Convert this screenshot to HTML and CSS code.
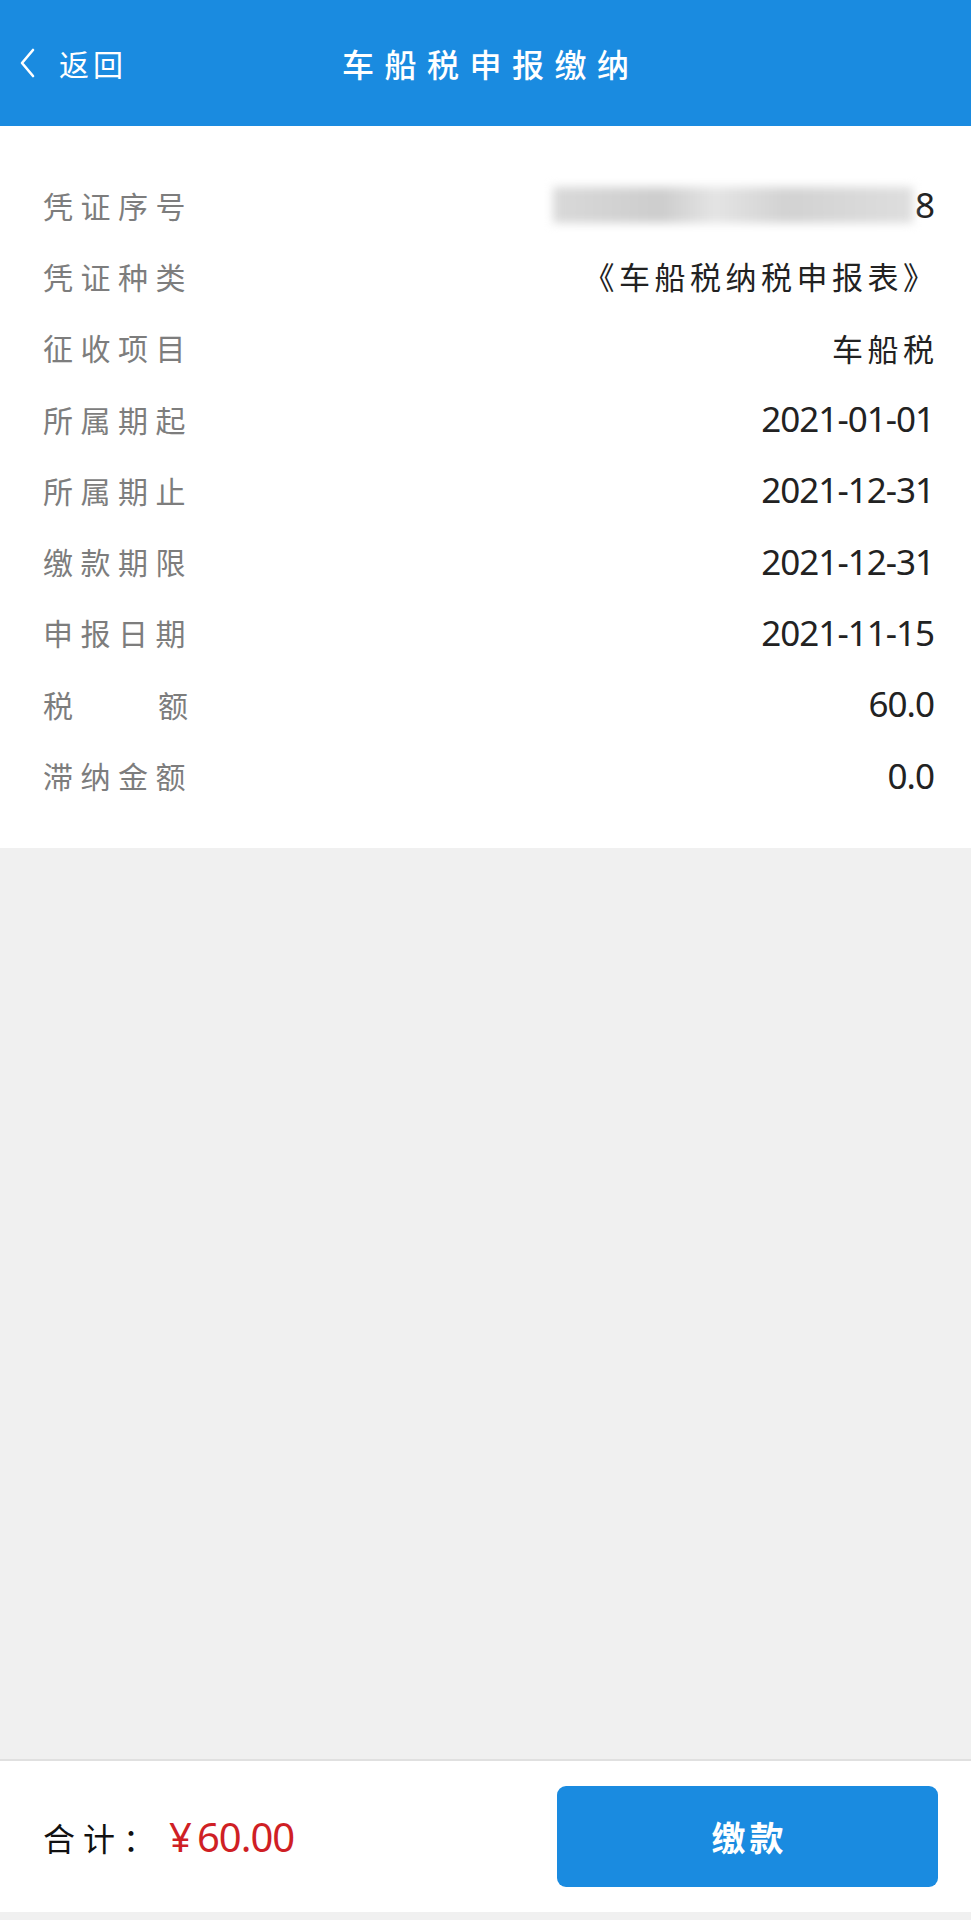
FILE: index.html
```html
<!DOCTYPE html>
<html lang="zh-CN">
<head>
    <meta charset="UTF-8">
    <meta name="viewport" content="width=device-width, initial-scale=1.0">
    <title>车船税申报缴纳</title>
    <link rel="stylesheet" href="styles.css">
</head>
<body>
<div class="page">

    <div class="top-bar">
        <div class="back">
            <svg class="back-icon" width="22" height="32" viewBox="0 0 22 32">
                <polyline points="16,3 5,16 16,29" fill="none" stroke="#fff" stroke-width="2.6" stroke-linecap="round" stroke-linejoin="round"/>
            </svg>
            <span>返回</span>
        </div>
        <h1 class="title">车船税申报缴纳</h1>
    </div>

    <div class="detail">
        <div class="row">
            <span class="label">凭证序号</span>
            <span class="value serial"><span class="masked"></span>8</span>
        </div>
        <div class="row">
            <span class="label">凭证种类</span>
            <span class="value cn">《车船税纳税申报表》</span>
        </div>
        <div class="row">
            <span class="label">征收项目</span>
            <span class="value cn">车船税</span>
        </div>
        <div class="row">
            <span class="label">所属期起</span>
            <span class="value">2021-01-01</span>
        </div>
        <div class="row">
            <span class="label">所属期止</span>
            <span class="value">2021-12-31</span>
        </div>
        <div class="row">
            <span class="label">缴款期限</span>
            <span class="value">2021-12-31</span>
        </div>
        <div class="row">
            <span class="label">申报日期</span>
            <span class="value">2021-11-15</span>
        </div>
        <div class="row">
            <span class="label label-split"><span>税</span><span>额</span></span>
            <span class="value">60.0</span>
        </div>
        <div class="row">
            <span class="label">滞纳金额</span>
            <span class="value">0.0</span>
        </div>
    </div>

    <div class="spacer"></div>

    <div class="bottom-bar">
        <div class="total">合计：<span class="amount"><span class="yen">¥</span>60.00</span></div>
        <button class="pay-button">缴款</button>
    </div>

</div>
</body>
</html>
```

FILE: styles.css
```css
body {
    margin: 0;
    background: #f0f0f0;
    font-family: "Noto Sans CJK SC", "Noto Sans", sans-serif;
}
.page {
    display: flex;
    flex-direction: column;
    height: 1920px;
}
.top-bar {
    position: relative;
    height: 126px;
    background: #1a8be0;
    color: white;
    display: flex;
    align-items: center;
    justify-content: center;
}
.back {
    position: absolute;
    left: 17px;
    top: 0;
    bottom: 0;
    display: flex;
    align-items: center;
    gap: 20px;
    font-size: 30px;
    letter-spacing: 4px;
}
.title {
    margin: 0;
    font-size: 32px;
    font-weight: 500;
    letter-spacing: 10.5px;
    margin-right: -10.5px;
}
.detail {
    background: white;
    padding: 43px 37px 37px 43px;
}
.row {
    display: flex;
    justify-content: space-between;
    align-items: center;
    height: 71.3px;
}
.label {
    width: 145px;
    font-size: 30px;
    letter-spacing: 7.5px;
    color: #7d7d7d;
    white-space: nowrap;
}
.label-split {
    display: flex;
    justify-content: space-between;
    letter-spacing: 0;
}
.value {
    font-family: "Noto Sans", sans-serif;
    font-size: 35px;
    letter-spacing: -1px;
    color: #222;
}
.value.cn {
    font-family: "Noto Sans CJK SC", sans-serif;
    font-size: 31px;
    letter-spacing: 4.5px;
    margin-right: -4.5px;
}
.serial {
    display: flex;
    align-items: center;
}
.masked {
    display: inline-block;
    width: 360px;
    height: 36px;
    margin-right: 2px;
    background: linear-gradient(90deg, #d9d9d9, #cdcdcd 30%, #e4e4e4 45%, #d2d2d2 65%, #dedede);
    filter: blur(5px);
}
.spacer {
    flex: 1;
}
.bottom-bar {
    background: white;
    border-top: 2px solid #e0e0e0;
    height: 151px;
    margin-bottom: 8px;
    display: flex;
    align-items: center;
    justify-content: space-between;
    padding: 0 33px 0 43px;
}
.total {
    font-size: 32px;
    letter-spacing: 8px;
    color: #111;
    display: flex;
    align-items: center;
}
.amount {
    font-family: "Noto Sans", sans-serif;
    color: #cf1f25;
    font-size: 40px;
    letter-spacing: -1px;
    margin-left: 6px;
}
.yen {
    margin-right: 6px;
}
.pay-button {
    width: 381px;
    height: 101px;
    background: #1a8be0;
    color: white;
    border: none;
    border-radius: 9px;
    font-family: "Noto Sans CJK SC", sans-serif;
    font-size: 34px;
    font-weight: bold;
    letter-spacing: 4px;
    text-indent: 4px;
    cursor: pointer;
}
```
